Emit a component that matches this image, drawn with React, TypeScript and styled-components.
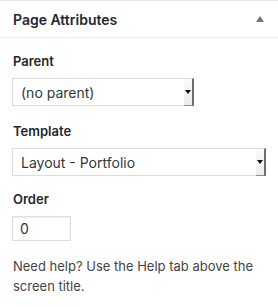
import styled, { createGlobalStyle } from 'styled-components'

const Global = createGlobalStyle`
  body {
    margin: 0;
    background: #fff;
    font-family: Inter, "Noto Sans", sans-serif;
    color: #444;
  }
`

const Box = styled.div`
  width: 278px;
  border-top: 1px solid #e5e5e5;
  background: #fff;
`

const Header = styled.div`
  height: 36px;
  padding: 0 12px 0 13px;
  display: flex;
  align-items: center;
  justify-content: space-between;
  border-bottom: 1px solid #eee;
  font-size: 14px;
  font-weight: 600;
  color: #23282d;
`

const Toggle = styled.span`
  width: 0;
  height: 0;
  margin-right: 2px;
  border-left: 4px solid transparent;
  border-right: 4px solid transparent;
  border-bottom: 6px solid #72777c;
`

const Inside = styled.div`
  padding: 14px 12px 0 12px;
`

const Label = styled.p<{ $gap?: number }>`
  margin: ${(p) => p.$gap ?? 0}px 0 7px 1px;
  font-size: 13px;
  line-height: 19px;
  font-weight: 600;
  color: #23282d;
`

const Select = styled.div<{ $width: string }>`
  box-sizing: border-box;
  width: ${(p) => p.$width};
  height: 28px;
  display: flex;
  align-items: stretch;
  border: 1px solid #ddd;
  border-right: none;
  background: #fff;
`

const Value = styled.span`
  flex: 1;
  display: flex;
  align-items: center;
  padding-left: 8px;
  font-size: 14px;
  color: #32373c;
`

const ArrowButton = styled.span`
  box-sizing: border-box;
  width: 10px;
  display: flex;
  align-items: center;
  justify-content: flex-start;
  padding-left: 1px;
  background: linear-gradient(#fafafa, #ececec);
  border-right: 2px solid #6d6d6d;
  border-bottom: 1px solid #8a8a8a;
  margin-top: -1px;
  margin-bottom: -1px;
  border-top: 1px solid #ddd;
`

const Caret = styled.span`
  width: 0;
  height: 0;
  border-left: 3px solid transparent;
  border-right: 3px solid transparent;
  border-top: 4px solid #111;
`

const NumberInput = styled.div`
  box-sizing: border-box;
  width: 59px;
  height: 25px;
  display: flex;
  align-items: center;
  padding-left: 7px;
  border: 1px solid #ddd;
  box-shadow: inset 0 1px 2px rgba(0, 0, 0, 0.07);
  font-size: 14px;
  color: #32373c;
`

const Help = styled.p`
  margin: 15px 0 0 1px;
  font-size: 13px;
  line-height: 20px;
  color: #444;
`

function Dropdown({ value, width }: { value: string; width: string }) {
  return (
    <Select $width={width}>
      <Value>{value}</Value>
      <ArrowButton>
        <Caret />
      </ArrowButton>
    </Select>
  )
}

export default function App() {
  return (
    <>
      <Global />
      <Box>
        <Header>
          Page Attributes
          <Toggle />
        </Header>
        <Inside>
          <Label>Parent</Label>
          <Dropdown value="(no parent)" width="182px" />
          <Label $gap={16}>Template</Label>
          <Dropdown value="Layout - Portfolio" width="254px" />
          <Label $gap={14}>Order</Label>
          <NumberInput>0</NumberInput>
          <Help>Need help? Use the Help tab above the screen title.</Help>
        </Inside>
      </Box>
    </>
  )
}
